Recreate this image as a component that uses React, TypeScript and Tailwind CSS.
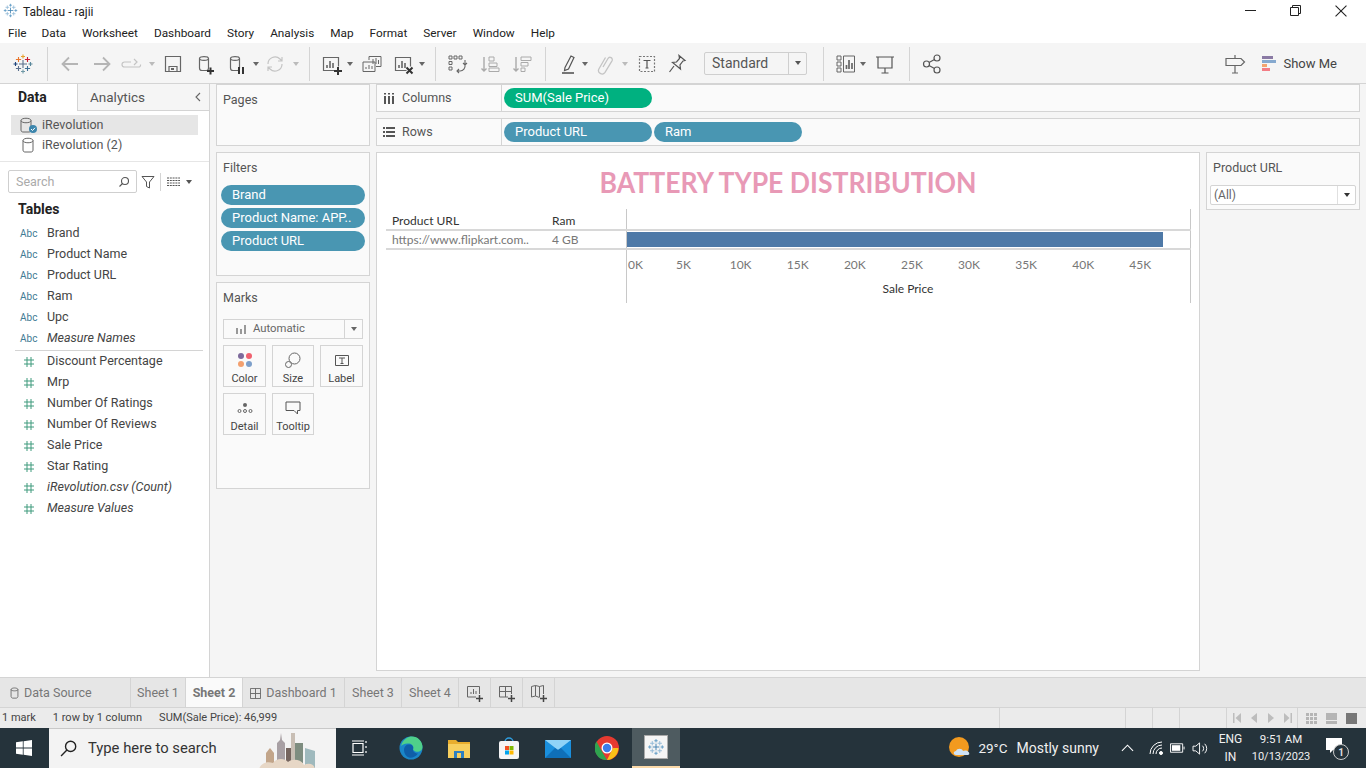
import React from "react";

const F = "font-['Roboto','Liberation_Sans',sans-serif]";

function Box({ c = "", children, vb = "0 0 24 24" }: { c?: string; children: React.ReactNode; vb?: string }) {
  return (
    <svg viewBox={vb} className={`w-6 h-6 shrink-0 ${c}`} fill="none" stroke="#666" strokeWidth="1.2">
      {children}
    </svg>
  );
}

function Caret({ c = "", color = "border-t-[#777]" }: { c?: string; color?: string }) {
  return (
    <div className={`w-2 h-2 shrink-0 flex items-center justify-center ${c}`}>
      <div className={`w-0 h-0 border-x-[3.5px] border-x-transparent border-t-[4px] ${color}`} />
    </div>
  );
}

function Sep({ c = "" }: { c?: string }) {
  return <div className={`w-px h-[34px] bg-[#d4d4d4] shrink-0 ${c}`} />;
}

function TableauLogo({ c = "", size = "w-6 h-6", mono = false }: { c?: string; size?: string; mono?: boolean }) {
  const col = mono ? ["#3d7fb0", "#8fb8d6", "#8fb8d6", "#8fb8d6", "#8fb8d6", "#5a98c4", "#5a98c4", "#5a98c4", "#5a98c4"]
    : ["#5b6f8c", "#e8762d", "#c72035", "#5b6f8c", "#3f6e94", "#e8a02d", "#7099a6", "#1f447a", "#59879b"];
  const pts: [number, number, number][] = [
    [12, 12, 4], [7.5, 7.5, 2.6], [16.5, 7.5, 2.6], [7.5, 16.5, 2.6], [16.5, 16.5, 2.6],
    [12, 4.5, 2], [12, 19.5, 2], [4.5, 12, 2], [19.5, 12, 2],
  ];
  return (
    <svg viewBox="0 0 24 24" className={`${size} shrink-0 ${c}`} fill="none" strokeWidth="1.1">
      {pts.map(([x, y, r], i) => (
        <path key={i} d={`M${x - r} ${y}H${x + r}M${x} ${y - r}V${y + r}`} stroke={col[i]} />
      ))}
    </svg>
  );
}

function Cyl({ children, c = "" }: { children?: React.ReactNode; c?: string }) {
  return (
    <Box c={c}>
      <path d="M6.500 6.500c0-2.500 9-2.500 9 0V16c0 2-1 2.500-2 2.500H9C7.500 18.500 6.500 18 6.500 16zM6.500 6.500c0 2.500 9 2.500 9 0" />
      {children}
    </Box>
  );
}

function BarsBox({ c = "", children }: { c?: string; children?: React.ReactNode }) {
  return (
    <Box c={c}>
      <path d="M15.500 18.500H4.500V5.500h15v9" />
      <path d="M8 16v-3M11 16V9M14 16v-5" strokeWidth="1.600" />
      {children}
    </Box>
  );
}

function Toolbar() {
  return (
    <div className="h-[41px] pt-px bg-[#f5f5f5] border-b border-[#d4d4d4] flex items-center shrink-0">
      <TableauLogo c="ml-[11px]" />
      <Sep c="ml-3" />
      <Box c="ml-[10px]"><path d="M20 12H5M11 5.500 4.500 12l6.500 6.500" stroke="#b5b5b5" strokeWidth="1.800" /></Box>
      <Box c="ml-2"><path d="M4 12h15M13 5.500l6.500 6.500-6.500 6.500" stroke="#b5b5b5" strokeWidth="1.800" /></Box>
      <Box c="ml-[6px]"><path d="M11 10H4.500a2 2 0 0 0 0 5h14a2 2 0 0 0 2-2.500M14 7l3 3-3 3" stroke="#c4c4c4" /></Box>
      <Caret c="ml-1" color="border-t-[#bbb]" />
      <Box c="ml-[5px]"><path d="M4.500 4.500h15v15h-15zM8 19.500v-5h8v5" stroke="#666" /><path d="M10 17h3" strokeWidth="2" /></Box>
      <Cyl c="ml-2"><path d="M14 19h7M17.500 15.500v7" stroke="#333" strokeWidth="2" /></Cyl>
      <Cyl c="ml-[7px]"><path d="M15 15v7M19 15v7" stroke="#333" strokeWidth="2" /></Cyl>
      <Caret c="ml-1" color="border-t-[#666]" />
      <Box c="ml-[3px]"><path d="M5 12a7 7 0 0 1 12-5l2 2M19 12a7 7 0 0 1-12 5l-2-2M19 5v4h-4M5 19v-4h4" stroke="#c4c4c4" /></Box>
      <Caret c="ml-[5px]" color="border-t-[#bbb]" />
      <Sep c="ml-[9px]" />
      <BarsBox c="ml-[9px]"><path d="M15 19h8M19 15v8" stroke="#333" strokeWidth="2" /></BarsBox>
      <Caret c="ml-[3px]" color="border-t-[#666]" />
      <Box c="ml-[6px]"><path d="M9 8V4.500h12v10h-5M3 10h12v9.500H3zM6 17v-2M9 17v-4M12 17v-3M13 12V7M16 12V6M18.500 12V8" strokeWidth="1" /></Box>
      <BarsBox c="ml-[7px]"><path d="M15.500 15.500l6 6M21.500 15.500l-6 6" stroke="#333" strokeWidth="2" /></BarsBox>
      <Caret c="ml-[3px]" color="border-t-[#666]" />
      <Sep c="ml-[9px]" />
      <Box c="ml-[9px]"><path d="M4 4h3v3H4zM9 4h3v3H9zM14 4h3v3h-3zM4 9.500h3v3H4zM4 15h3v3H4z" strokeWidth="1" /><path d="M20 8v5a5 5 0 0 1-5 6h-3M18 11l2 2 2-2M14 17l-2 2 2 2" strokeWidth="1.100" /></Box>
      <Box c="ml-[9px]"><path d="M6 5v14M3.500 16.500 6 19l2.500-2.500" stroke="#aaa" strokeWidth="1.400" /><path d="M11 5h5v4h-5zM11 11h8v3.500h-8zM11 16h10v3.500H11z" stroke="#aaa" strokeWidth="1" /></Box>
      <Box c="ml-2"><path d="M6 5v14M3.500 16.500 6 19l2.500-2.500" stroke="#aaa" strokeWidth="1.400" /><path d="M11 5h10v3.500H11zM11 10.500h7V14h-7zM11 16h4v3.500h-4z" stroke="#aaa" strokeWidth="1" /></Box>
      <Sep c="ml-[11px]" />
      <Box c="ml-[10px]"><path d="M9 15.500 15 4l3 1.500-5.500 11.500-4 1.500z" stroke="#555" /><path d="M6 21h12" stroke="#555" strokeWidth="1.600" /></Box>
      <Caret c="ml-px" color="border-t-[#666]" />
      <Box c="ml-1"><path d="M10 15 15 6.500a2.300 2.300 0 0 1 4 2.300l-7 11.500a3.500 3.500 0 0 1-6-3.600L12.500 5.500" stroke="#c4c4c4" strokeWidth="1.300" /></Box>
      <Caret c="ml-1" color="border-t-[#bbb]" />
      <Box c="ml-[6px]"><path d="M4.500 4.500h15v15h-15z" strokeDasharray="2 1.500" stroke="#777" /><path d="M8.500 8.500h7M12 8.500v7.500M10.500 16h3" stroke="#555" /></Box>
      <Box c="ml-[6px]"><path d="M14 3.500l6 5-2 .5-3 4 .5 4-8-6.500 4-.5 3-3.500zM9 14l-4.500 6" stroke="#555" /></Box>
      <div className="ml-[15px] w-[103px] h-[23px] -mt-px rounded-[2px] border border-[#cfcfcf] bg-[#f5f5f5] flex items-center shrink-0">
        <span className="ml-[7px] text-[14px] text-[#555] flex-1">Standard</span>
        <div className="w-[18px] h-full border-l border-[#cfcfcf] flex items-center justify-center"><Caret color="border-t-[#555]" /></div>
      </div>
      <Sep c="ml-4" />
      <Box c="ml-[10px]"><path d="M3 4h4v4H3zM3 10h4v4H3zM3 16h4v4H3zM9.500 4h11v16h-11z" strokeWidth="1" /><path d="M12.500 17v-4M15 17V8M18 17v-6" strokeWidth="1.700" /></Box>
      <Caret c="ml-px" color="border-t-[#666]" />
      <Box c="ml-[6px]"><path d="M3 5h18M5 5v11h14V5M12 16v5M8.500 21h7" stroke="#555" /></Box>
      <Sep c="ml-3" />
      <Box c="ml-[10px]"><circle cx="6.500" cy="12" r="3" stroke="#555" /><circle cx="17" cy="6" r="3" stroke="#555" /><circle cx="17" cy="18" r="3" stroke="#555" /><path d="M9 10.500l5.500-3M9 13.500l5.500 3" stroke="#555" /></Box>
      <Box c="ml-auto"><path d="M3 6.500h15l3.500 3.500-3.500 3.500H3zM12 3v3.500M12 13.500V21M9 21h6" stroke="#666" /></Box>
      <div className="ml-[15px] mr-[29px] flex items-center">
        <div className="w-[15px] flex flex-col gap-px">
          <div className="h-[3px] w-[11px] bg-[#8a7aa4]" />
          <div className="h-[3px] w-[14px] bg-[#86a9cf]" />
          <div className="h-[3px] w-[5px] bg-[#f3a46f]" />
          <div className="h-[3px] w-[8px] bg-[#f37d85]" />
        </div>
        <span className="ml-[6px] text-[13px] text-[#444]">Show Me</span>
      </div>
    </div>
  );
}

const dims = ["Brand", "Product Name", "Product URL", "Ram", "Upc"];
const meas = ["Discount Percentage", "Mrp", "Number Of Ratings", "Number Of Reviews", "Sale Price", "Star Rating"];

function Abc({ label, italic }: { label: string; italic?: boolean }) {
  return (
    <div className="h-[21px] flex items-center">
      <span className="ml-[20px] w-[27px] text-[10px] text-[#3f7a94]">Abc</span>
      <span className={`text-[12.500px] text-[#444] ${italic ? "italic" : ""}`}>{label}</span>
    </div>
  );
}

function Hash({ label, italic }: { label: string; italic?: boolean }) {
  return (
    <div className="h-[21px] flex items-center">
      <svg viewBox="0 0 10 10" className="ml-6 w-[10px] h-[10px] mr-[13px] shrink-0" stroke="#3f9a7c" strokeWidth="1" fill="none">
        <path d="M3 0v10M7 0v10M0 3h10M0 7h10" />
      </svg>
      <span className={`text-[12.500px] text-[#444] ${italic ? "italic" : ""}`}>{label}</span>
    </div>
  );
}

function DataPane() {
  return (
    <div className="w-[210px] shrink-0 bg-white border-r border-[#d4d4d4] flex flex-col">
      <div className="h-[27px] flex shrink-0">
        <div className="w-[77px] pl-[18px] flex items-center text-[14px] font-bold text-[#222]">Data</div>
        <div className="flex-1 bg-[#f5f5f5] border-l border-b border-[#d4d4d4] flex items-center pl-[12px] text-[13.500px] text-[#555]">
          Analytics
          <svg viewBox="0 0 10 10" className="ml-auto mr-[6px] w-[10px] h-[10px]" fill="none" stroke="#666" strokeWidth="1.100"><path d="M7 1 3 5l4 4" /></svg>
        </div>
      </div>
      <div className="mt-1 ml-[11px] w-[187px] h-5 bg-[#e6e6e6] flex items-center text-[12.500px] text-[#555]">
        <div className="relative w-[17px] h-[16px] ml-[9px] mr-[5px]">
          <svg viewBox="0 0 12 16" className="w-3 h-4" fill="none" stroke="#666"><path d="M1 3.500c0-3 10-3 10 0V13c0 1.500-1 2-2 2H3c-1 0-2-.5-2-2zM1 3.500c0 3 10 3 10 0" /></svg>
          <svg viewBox="0 0 8 8" className="absolute right-0 bottom-0 w-[8px] h-[8px]">
            <circle cx="4" cy="4" r="4" fill="#3c86ad" />
            <path d="M2 4l1.500 1.500L6 2.800" fill="none" stroke="#fff" strokeWidth="1" />
          </svg>
        </div>
        iRevolution
      </div>
      <div className="ml-[11px] h-5 flex items-center text-[12.500px] text-[#555]">
        <svg viewBox="0 0 12 16" className="w-3 h-4 ml-[11px] mr-2" fill="none" stroke="#666"><path d="M1 3.500c0-3 10-3 10 0V13c0 1.500-1 2-2 2H3c-1 0-2-.5-2-2zM1 3.500c0 3 10 3 10 0" /></svg>
        iRevolution (2)
      </div>
      <div className="mt-[6px] h-px bg-[#e6e6e6]" />
      <div className="mt-2 flex items-center h-[23px]">
        <div className="ml-2 w-[129px] h-[23px] pt-px rounded-[2px] border border-[#cfcfcf] flex items-center px-[7px] text-[12.500px] text-[#aaa]">
          Search
          <svg viewBox="0 0 12 12" className="ml-auto mr-[-1px] w-3 h-3" fill="none" stroke="#555" strokeWidth="1.100"><circle cx="7" cy="5" r="3.500" /><path d="M4.500 7.500 1.500 10.500" /></svg>
        </div>
        <svg viewBox="0 0 14 14" className="w-[14px] h-[14px] ml-[4px]" fill="none" stroke="#555"><path d="M1 1.500h12L8.500 7v6l-3-1.500V7z" /></svg>
        <div className="ml-[5px] w-px h-[18px] bg-[#d4d4d4]" />
        <svg viewBox="0 0 13 9" className="ml-[6px] w-[13px] h-[9px]" stroke="#555" strokeWidth="1" strokeDasharray="2 .8" fill="none"><path d="M0 1h13M0 3.500h13M0 6h13M0 8.500h13" /></svg>
        <Caret c="ml-[5px]" color="border-t-[#555]" />
      </div>
      <div className="mt-[6px] h-[20px] pl-[18px] flex items-center text-[14px] font-bold text-[#222]">Tables</div>
      <div className="mt-1">
        {dims.map((d) => <Abc key={d} label={d} />)}
        <Abc label="Measure Names" italic />
      </div>
      <div className="ml-[15px] w-[188px] h-px bg-[#d4d4d4] mt-px" />
      {meas.map((d) => <Hash key={d} label={d} />)}
      <Hash label="iRevolution.csv (Count)" italic />
      <Hash label="Measure Values" italic />
    </div>
  );
}

function Panel({ title, c = "", children }: { title: string; c?: string; children?: React.ReactNode }) {
  return (
    <div className={`bg-[#fafafa] border border-[#d4d4d4] shrink-0 ${c}`}>
      <div className="pl-[6px] h-[30px] flex items-center text-[12.500px] text-[#555]">{title}</div>
      {children}
    </div>
  );
}

function Pill({ label, c = "bg-[#4996b2] w-[144px]" }: { label: string; c?: string }) {
  return <div className={`h-5 rounded-full ${c} pl-[11px] flex items-center text-[13px] text-white whitespace-nowrap`}>{label}</div>;
}

function MarkBtn({ label, c = "w-[43px]", children }: { label: string; c?: string; children: React.ReactNode }) {
  return (
    <div className={`${c} h-[42px] border border-[#d4d4d4] flex flex-col items-center pt-[5px]`}>
      <div className="h-[18px] flex items-center justify-center">{children}</div>
      <span className="mt-[3px] text-[11px] leading-[13px] text-[#444] whitespace-nowrap">{label}</span>
    </div>
  );
}

function Cards() {
  return (
    <div className="w-[154px] ml-[6px] shrink-0 flex flex-col">
      <Panel title="Pages" c="h-[62px]" />
      <Panel title="Filters" c="h-[124px] mt-[6px]">
        <div className="ml-1 mt-[2px] flex flex-col gap-[3px]">
          <Pill label="Brand" />
          <Pill label="Product Name: APP.." />
          <Pill label="Product URL" />
        </div>
      </Panel>
      <Panel title="Marks" c="h-[207px] mt-[6px]">
        <div className="ml-[6px] mt-[6px] w-[140px] h-5 border border-[#d4d4d4] flex items-center">
          <svg viewBox="0 0 10 10" className="ml-[12px] w-[10px] h-[10px]" fill="#999"><path d="M0 4h2v6H0zM4 5h2v5H4zM8 1h2v9H8z" /></svg>
          <span className="ml-[7px] pt-px text-[11.300px] text-[#666] flex-1">Automatic</span>
          <div className="w-[18px] h-full border-l border-[#d4d4d4] flex items-center justify-center"><Caret color="border-t-[#666]" /></div>
        </div>
        <div className="ml-[6px] mt-[6px] flex gap-[6px]">
          <MarkBtn label="Color">
            <svg viewBox="0 0 16 16" className="w-[16px] h-[16px]"><circle cx="4" cy="4" r="3" fill="#7d6a9c" /><circle cx="12" cy="4" r="3" fill="#f0616f" /><circle cx="4" cy="12" r="3" fill="#f3a06f" /><circle cx="12" cy="12" r="3" fill="#7d9fca" /></svg>
          </MarkBtn>
          <MarkBtn label="Size" c="w-[42px]">
            <svg viewBox="0 0 16 16" className="w-[16px] h-[16px]" fill="none" stroke="#666"><circle cx="9.500" cy="6.500" r="5.500" /><circle cx="3.500" cy="12.500" r="3" fill="#fafafa" /></svg>
          </MarkBtn>
          <MarkBtn label="Label">
            <svg viewBox="0 0 14 14" className="w-[14px] h-[14px]" fill="none" stroke="#555"><path d="M.5 2.500h13v10H.5zM4 5h6M7 5v5.500M5.500 10.500h3" /></svg>
          </MarkBtn>
        </div>
        <div className="ml-[6px] mt-[6px] flex gap-[6px]">
          <MarkBtn label="Detail">
            <svg viewBox="0 0 16 14" className="w-[16px] h-[14px]" fill="none" stroke="#666"><circle cx="8" cy="4" r="2" fill="#666" stroke="none" /><circle cx="2.500" cy="10" r="1.500" /><circle cx="8" cy="10" r="1.500" /><circle cx="13.500" cy="10" r="1.500" /></svg>
          </MarkBtn>
          <MarkBtn label="Tooltip" c="w-[42px]">
            <svg viewBox="0 0 16 14" className="w-[16px] h-[14px]" fill="none" stroke="#555"><path d="M1 1h14v8.500h-2.500V13L9 9.500H1z" /></svg>
          </MarkBtn>
        </div>
      </Panel>
    </div>
  );
}

function Shelf({ label, icon, c = "", children }: { label: string; icon: React.ReactNode; c?: string; children: React.ReactNode }) {
  return (
    <div className={`h-[28px] bg-[#fafafa] border border-[#d4d4d4] flex items-center shrink-0 ${c}`}>
      <div className="w-[125px] h-full border-r border-[#d4d4d4] flex items-center text-[12.500px] text-[#555] shrink-0">
        <div className="w-[24px] flex justify-center">{icon}</div>
        <span className="ml-px">{label}</span>
      </div>
      <div className="flex ml-[2px] gap-[2px]">{children}</div>
    </div>
  );
}

const ticks = ["5K", "10K", "15K", "20K", "25K", "30K", "35K", "40K", "45K"];

function Chart() {
  return (
    <div className="flex-1 min-h-0 bg-white border border-[#d4d4d4] flex flex-col">
      <div className="h-[56px] pt-[12px] shrink-0 text-center font-['Lato',sans-serif] font-bold text-[29px] leading-[34px] text-[#e899b6] scale-x-[0.917] whitespace-nowrap">BATTERY TYPE DISTRIBUTION</div>
      <div className="ml-[9px] mr-[8px] font-['Lato',sans-serif] text-[12px]">
        <div className="h-[22px] flex border-b-[2px] border-[#d8d8d8]">
          <div className="w-[240px] flex items-center pt-[4px] pl-[6px] text-[#333]">
            <span className="w-[160px]">Product URL</span><span>Ram</span>
          </div>
          <div className="flex-1 border-x border-[#c8c8c8]" />
        </div>
        <div className="h-[19px] flex border-b-[2px] border-[#d8d8d8]">
          <div className="w-[240px] flex items-center pl-[6px] text-[#777]">
            <span className="w-[160px] whitespace-nowrap">https://www.flipkart.com..</span><span>4 GB</span>
          </div>
          <div className="flex-1 border-x border-[#c8c8c8] flex items-center">
            <div className="w-[536px] h-[15px] bg-[#4e79a7]" />
          </div>
        </div>
        <div className="h-[53px] flex">
          <div className="w-[240px]" />
          <div className="flex-1 border-x border-[#c8c8c8] flex flex-col">
            <div className="flex mt-[7px] text-[#777] h-[16px] items-center">
              <span className="w-[28px] pl-px">0K</span>
              {ticks.map((t) => <span key={t} className="w-[57.100px] text-center">{t}</span>)}
            </div>
            <div className="mt-[7px] text-center text-[#333] pr-[1px]">Sale Price</div>
          </div>
        </div>
      </div>
    </div>
  );
}

function Legend() {
  return (
    <div className="w-[154px] ml-[6px] h-[58px] bg-[#fafafa] border border-[#d4d4d4] shrink-0">
      <div className="pl-[6px] h-[30px] flex items-center text-[12.500px] text-[#555]">Product URL</div>
      <div className="ml-[3px] mt-[2px] w-[146px] h-[20px] bg-white border border-[#d4d4d4] rounded-[2px] flex items-center pl-[3px] text-[12px] text-[#666]">
        <span className="flex-1">(All)</span>
        <div className="w-[18px] h-full border-l border-[#e0e0e0] flex items-center justify-center"><Caret color="border-t-[#333]" /></div>
      </div>
    </div>
  );
}

function Tab({ c = "", children }: { c?: string; children: React.ReactNode }) {
  return <div className={`h-full pt-px border-r border-[#d4d4d4] flex items-center text-[12.500px] text-[#777] shrink-0 ${c}`}>{children}</div>;
}

function PlusTab({ children }: { children: React.ReactNode }) {
  return (
    <div className="w-[32px] h-full border-r border-[#d4d4d4] flex items-center justify-center shrink-0">
      <svg viewBox="0 0 18 18" className="w-[18px] h-[18px]" fill="none" stroke="#666">
        {children}
        <path d="M10 14.500h7M13.500 11v7" stroke="#444" strokeWidth="1.500" />
      </svg>
    </div>
  );
}

function Tabs() {
  return (
    <div className="h-[31px] bg-[#e6e6e6] border-y border-[#d4d4d4] flex shrink-0">
      <Tab c="w-[131px] pl-[10px]">
        <svg viewBox="0 0 10 14" className="w-[9px] h-[12px] mr-[5px]" fill="none" stroke="#666"><path d="M1 3c0-2.500 8-2.500 8 0v8c0 1-1 2-2 2H3c-1 0-2-1-2-2zM1 3c0 2 8 2 8 0" /></svg>
        Data Source
      </Tab>
      <Tab c="w-[55px] justify-center">Sheet 1</Tab>
      <Tab c="w-[57px] justify-center bg-[#fafafa] font-bold text-[#555]">Sheet 2</Tab>
      <Tab c="w-[102px] justify-center">
        <svg viewBox="0 0 12 12" className="w-[11px] h-[11px] mr-[5px]" fill="none" stroke="#666"><path d="M.5.500h11v11H.5zM6 .500v11M.5 6h11" /></svg>
        Dashboard 1
      </Tab>
      <Tab c="w-[57px] justify-center">Sheet 3</Tab>
      <Tab c="w-[57px] justify-center">Sheet 4</Tab>
      <PlusTab><path d="M10 13H1.500V2.500h12V10M5 10V8M7.500 10V5M10 10V7" /></PlusTab>
      <PlusTab><path d="M10 13H1.500V2.500h12V10M7.500 2.500V13M1.500 7.500h12" /></PlusTab>
      <PlusTab><path d="M9.500 13.500l-4-1.500-4 1V2.500l4-1 4 1 4-1V10M5.500 1.500V12M9.500 2.500V13" /></PlusTab>
    </div>
  );
}

function StatusBar() {
  return (
    <div className="h-[20px] bg-[#ebebeb] flex items-center text-[11px] text-[#444] shrink-0">
      <span className="ml-[2px] pt-px">1 mark</span>
      <span className="ml-[17px] pt-px">1 row by 1 column</span>
      <span className="ml-[17px] pt-px">SUM(Sale Price): 46,999</span>
      <div className="ml-auto flex h-full">
        <div className="w-[127px] h-full border-x border-[#d4d4d4]" />
        <div className="w-[27px] h-full border-r border-[#d4d4d4]" />
        <div className="w-[27px] h-full border-r border-[#d4d4d4]" />
        <div className="w-[47px] h-full border-r border-[#d4d4d4]" />
        <div className="w-[71px] h-full border-r border-[#d4d4d4] flex items-center justify-center gap-[9px]">
          <svg viewBox="0 0 8 10" className="w-2 h-[10px]" fill="#bdbdbd"><path d="M0 0h1.500v10H0zM8 0v10L2.500 5z" /></svg>
          <svg viewBox="0 0 8 10" className="w-2 h-[10px]" fill="#bdbdbd"><path d="M7 0v10L1 5z" /></svg>
          <svg viewBox="0 0 8 10" className="w-2 h-[10px]" fill="#bdbdbd"><path d="M1 0v10l6-5z" /></svg>
          <svg viewBox="0 0 8 10" className="w-2 h-[10px]" fill="#bdbdbd"><path d="M0 0v10l5.500-5zM6.500 0H8v10H6.500z" /></svg>
        </div>
        <div className="w-[68px] h-full flex items-center pl-2 gap-[9px]">
          <div className="w-[11px] h-[11px] grid grid-cols-3 gap-px">
            {Array.from({ length: 9 }).map((_, i) => <div key={i} className="bg-[#b5b5b5]" />)}
          </div>
          <div className="w-[11px] h-[11px] flex flex-col gap-px">
            <div className="h-[7px] bg-[#b5b5b5]" />
            <div className="h-[3px] bg-[#b5b5b5]" />
          </div>
          <div className="w-[11px] h-[11px] bg-[#777]" />
        </div>
      </div>
    </div>
  );
}

function Taskbar() {
  return (
    <div className="h-[40px] bg-[#25333b] flex items-center text-white shrink-0 relative">
      <svg viewBox="0 0 16 16" className="ml-[16px] w-[16px] h-[16px]" fill="#fff">
        <path d="M0 2.300 6.800 1.300v6.300H0zM7.600 1.200 16 0v7.600H7.600zM0 8.400h6.800v6.300L0 13.700zM7.600 8.400H16V16l-8.400-1.200z" />
      </svg>
      <div className="ml-[17px] w-[287px] h-[40px] bg-[#f3f3f3] flex items-center relative overflow-hidden border-t border-[#c8c8c8]">
        <svg viewBox="0 0 16 16" className="ml-[11px] w-[17px] h-[17px]" fill="none" stroke="#222" strokeWidth="1.300"><circle cx="10" cy="6" r="4.800" /><path d="M6.500 9.500 1 15" /></svg>
        <span className="ml-[11px] text-[14.800px] text-[#333]">Type here to search</span>
        <svg viewBox="0 0 72 40" className="absolute left-[209px] top-0 w-[72px] h-[40px]">
          <path d="M8 40V24l4-5 4 5v16z" fill="#c2a58a" />
          <path d="M19 40V14l3-3 1-7 1 7 3 3v26z" fill="#a8a0a4" />
          <path d="M28 40V19h9v21z" fill="#75655f" />
          <path d="M33 40V4h4v36z" fill="#c8beb4" />
          <path d="M37 40V14h8v26z" fill="#7e8d80" />
          <path d="M47 40V19l10 3v18z" fill="#9fb9bd" />
          <path d="M1 40c2-6 8-8 14-6 3-5 12-5 15-1 5-4 14-2 16 3 4-2 10-2 11 4z" fill="#e7d7c6" />
        </svg>
      </div>
      <svg viewBox="0 0 16 16" className="ml-[16px] w-[16px] h-[16px]" fill="none" stroke="#fff" strokeWidth="1.200"><path d="M1 3.500h10v9H1zM0 1h12M0 15h12M14 1v2M14 6v2M14 11v2" /></svg>
      <svg viewBox="0 0 24 24" className="ml-[31px] w-[24px] h-[24px]">
        <circle cx="12" cy="12" r="11.500" fill="#1a86c8" />
        <path d="M2 10C4 3 9 .500 13 .500c6 0 10.500 5 10.500 10.500 0 4-4 5.500-7 4.500-2-.7-3-2-2-3.500 0-3-3-5-6-4.500C5 7.500 3 9 2 10z" fill="#4fd08a" />
        <path d="M5 14c0-4 3-6 6-5.500 3 .3 3.500 3 3 4.500-.5 2 1.500 4.500 5 4.500-2 3-6 5-9 4-3-1-5-4-5-7.500z" fill="#0f5ea8" />
      </svg>
      <svg viewBox="0 0 22 20" className="ml-[25px] w-[22px] h-[20px]">
        <path d="M0 2h8l2 2h12v3H0z" fill="#e8ad2d" />
        <path d="M0 6h22v14H0z" fill="#f7cf5e" />
        <path d="M6 13h10v7H6z" fill="#2d7fc1" />
        <path d="M9 15h4v5H9z" fill="#f7cf5e" />
      </svg>
      <svg viewBox="0 0 22 24" className="ml-[28px] w-[22px] h-[24px]">
        <path d="M7 6a4 4 0 0 1 8 0" stroke="#2f9fe0" strokeWidth="1.500" fill="none" />
        <rect x="1" y="5" width="20" height="18" rx="2" fill="#f5f5f5" />
        <rect x="7" y="10" width="4" height="4" fill="#f25022" />
        <rect x="11.500" y="10" width="4" height="4" fill="#7fba00" />
        <rect x="7" y="14.500" width="4" height="4" fill="#00a4ef" />
        <rect x="11.500" y="14.500" width="4" height="4" fill="#ffb900" />
      </svg>
      <svg viewBox="0 0 26 20" className="ml-[25px] w-[26px] h-[20px]">
        <path d="M0 2h26v18H0z" fill="#1a8fdc" />
        <path d="M0 2h26L13 12z" fill="#8fd3f7" />
        <path d="M0 20 10 10l3 2 3-2 10 10z" fill="#0f6fb8" />
      </svg>
      <svg viewBox="0 0 24 24" className="ml-[24px] w-[24px] h-[24px]">
        <circle cx="12" cy="12" r="12" fill="#e53a30" />
        <path d="M12 24 5 12 1.500 5.500A12 12 0 0 0 12 24z" fill="#2fa44f" />
        <path d="M12 24 18 12h5.400A12 12 0 0 1 12 24z" fill="#fbc117" />
        <circle cx="12" cy="12" r="5.500" fill="#fff" />
        <circle cx="12" cy="12" r="4.200" fill="#3b7de9" />
      </svg>
      <div className="ml-[13px] w-[48px] h-[40px] bg-[#4e5b60] border-b-[2px] border-[#fbd9a8] flex items-center justify-center">
        <div className="w-[24px] h-[24px] bg-[#f5f5f5] border border-[#aaa] flex items-center justify-center">
          <TableauLogo size="w-[20px] h-[20px]" mono />
        </div>
      </div>
      <div className="ml-auto flex items-center h-full">
        <svg viewBox="0 0 22 22" className="w-[22px] h-[22px]">
          <circle cx="10" cy="10" r="10" fill="#f29a1f" />
          <path d="M7 18c-3 0-3-4 0-4 1-3 6-3 7 0 1-1 5-1 6 1.500 1 2.500-1 2.500-2 2.500z" fill="#cfe2f5" />
        </svg>
        <span className="ml-[7px] text-[13.500px] text-[#f0f0f0]">29°C</span>
        <span className="ml-[9px] text-[14px] text-[#f0f0f0]">Mostly sunny</span>
        <svg viewBox="0 0 14 8" className="ml-[22px] w-[13px] h-[8px]" fill="none" stroke="#fff" strokeWidth="1.200"><path d="M1 7l6-6 6 6" /></svg>
        <svg viewBox="0 0 14 14" className="ml-[15px] w-[14px] h-[14px]" fill="none" stroke="#fff"><path d="M1 13a12 12 0 0 1 12-12M4 13a9 9 0 0 1 9-9M7 13a6 6 0 0 1 6-6" /><circle cx="12" cy="12" r="1.500" fill="#fff" /></svg>
        <svg viewBox="0 0 16 10" className="ml-[7px] w-[15px] h-[10px]" fill="none" stroke="#fff"><path d="M.5.500h13v9H.5zM15 3.500v3" /><path d="M2 2h9v6H2z" fill="#fff" stroke="none" /></svg>
        <svg viewBox="0 0 18 16" className="ml-[7px] w-[17px] h-[15px]" fill="none" stroke="#fff"><path d="M1 5.500h3L8 2v12L4 10.500H1zM11 5a4 4 0 0 1 0 6M13.500 3a7 7 0 0 1 0 10" /></svg>
        <div className="ml-[10px] w-[23px] flex flex-col items-center text-[12px] leading-[18px] text-[#f0f0f0]"><span>ENG</span><span>IN</span></div>
        <div className="ml-[10px] w-[58px] flex flex-col items-center text-[11.500px] leading-[18px] text-[#f0f0f0]"><span>9:51 AM</span><span className="text-[11px]">10/13/2023</span></div>
        <div className="relative ml-[16px] mr-[22px] w-[18px] h-[22px]">
          <svg viewBox="0 0 16 16" className="w-[16px] h-[16px] mt-px" fill="#fff"><path d="M0 0h16v12H7l-3 3v-3H0z" /></svg>
          <div className="absolute left-[7px] top-[7px] w-[16px] h-[16px] rounded-full bg-[#25333b] border border-[#ccc] flex items-center justify-center text-[10px] font-bold text-[#ddd]">1</div>
        </div>
      </div>
    </div>
  );
}

export default function App() {
  return (
    <div className={`w-[1366px] h-[768px] overflow-hidden flex flex-col bg-white ${F}`}>
      <div className="h-[21px] flex items-center shrink-0 bg-white">
        <TableauLogo c="ml-[2px]" size="w-[17px] h-[17px]" mono />
        <span className="ml-[4px] pt-[3px] text-[12px] text-[#222]">Tableau - rajii</span>
        <div className="ml-auto flex items-center h-full">
          <div className="w-[11px] h-px bg-[#222]" />
          <svg viewBox="0 0 11 11" className="ml-[34px] w-[11px] h-[11px]" fill="none" stroke="#222"><path d="M.5 2.500h8v8h-8zM2.500 2.500V.500h8v8h-2" /></svg>
          <svg viewBox="0 0 11 11" className="ml-[34px] mr-[19px] w-[12px] h-[12px]" fill="none" stroke="#222"><path d="M.5.500l10 10M10.500.500l-10 10" /></svg>
        </div>
      </div>
      <div className="h-[22px] pt-[3px] flex items-center shrink-0 bg-white text-[11.800px] text-[#222]">
        <span className="ml-2">File</span>
        <span className="ml-[15px]">Data</span>
        <span className="ml-[16px]">Worksheet</span>
        <span className="ml-[16px]">Dashboard</span>
        <span className="ml-[16px]">Story</span>
        <span className="ml-[16px]">Analysis</span>
        <span className="ml-[16px]">Map</span>
        <span className="ml-[16px]">Format</span>
        <span className="ml-[16px]">Server</span>
        <span className="ml-[16px]">Window</span>
        <span className="ml-[16px]">Help</span>
      </div>
      <Toolbar />
      <div className="flex-1 min-h-0 flex bg-[#f5f5f5]">
        <DataPane />
        <Cards />
        <div className="flex-1 min-w-0 ml-[6px] mr-[6px] flex flex-col pb-[6px]">
          <Shelf label="Columns" icon={<svg viewBox="0 0 10 11" className="w-[10px] h-[11px]" fill="#555"><path d="M0 3h2v8H0zM4 3h2v8H4zM8 3h2v8H8zM0 0h2v1.500H0zM4 0h2v1.500H4zM8 0h2v1.500H8z" /></svg>}>
            <Pill label="SUM(Sale Price)" c="bg-[#00b180] w-[148px]" />
          </Shelf>
          <Shelf label="Rows" c="mt-[6px]" icon={<svg viewBox="0 0 12 10" className="w-[12px] h-[10px]" fill="#555"><path d="M0 0h2v2H0zM3 0h9v2H3zM0 4h2v2H0zM3 4h9v2H3zM0 8h2v2H0zM3 8h9v2H3z" /></svg>}>
            <Pill label="Product URL" c="bg-[#4996b2] w-[148px]" />
            <Pill label="Ram" c="bg-[#4996b2] w-[148px]" />
          </Shelf>
          <div className="flex-1 min-h-0 flex mt-[6px]">
            <Chart />
            <Legend />
          </div>
        </div>
      </div>
      <Tabs />
      <StatusBar />
      <Taskbar />
    </div>
  );
}
